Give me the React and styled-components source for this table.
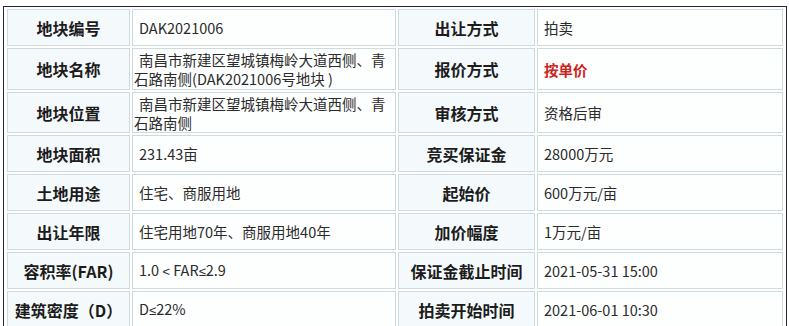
import React from 'react'
import styled, { createGlobalStyle } from 'styled-components'

const GlobalStyle = createGlobalStyle`
  html, body {
    margin: 0;
    padding: 0;
    background: #ffffff;
  }
  body {
    font-family: "Noto Sans CJK SC", "Noto Sans", sans-serif;
  }
`

const Page = styled.div`
  width: 789px;
  height: 326px;
  overflow: hidden;
  padding: 6px 0 0 3px;
  box-sizing: border-box;
`

const Frame = styled.div`
  width: 784px;
  box-sizing: border-box;
  border: 1px solid #25254a;
  padding: 2px 3px 3px 3px;
`

const Grid = styled.div`
  display: grid;
  grid-template-columns: 123px 264px 137px 246px;
  column-gap: 2px;
  row-gap: 2px;
`

const Cell = styled.div`
  box-sizing: border-box;
  border: 1px solid #cddade;
  display: flex;
  align-items: center;
`

const Label = styled(Cell)`
  background: #f4f9fb;
  justify-content: center;
  font-size: 16px;
  font-weight: bold;
  color: #1c1c1c;
  white-space: nowrap;
`

const Value = styled(Cell)`
  background: #fdfefe;
  padding: 0 1px 0 1px;
  font-size: 14.5px;
  line-height: 19px;
  text-indent: 5px;
  color: ${props => (props.$red ? '#cc2420' : '#2b2b2b')};
  font-weight: ${props => (props.$red ? 'bold' : 'normal')};
`

// narrow math signs, like the original page's font
const Sym = styled.span`
  font-family: "Liberation Sans", "DejaVu Sans", sans-serif;
  font-size: 13px;
`

const rows = [
  { height: 37, items: [['地块编号', 'DAK2021006'], ['出让方式', '拍卖']] },
  { height: 42, items: [['地块名称', '南昌市新建区望城镇梅岭大道西侧、青石路南侧(DAK2021006号地块 )'], ['报价方式', '按单价', true]] },
  { height: 41, items: [['地块位置', '南昌市新建区望城镇梅岭大道西侧、青石路南侧'], ['审核方式', '资格后审']] },
  { height: 37, items: [['地块面积', '231.43亩'], ['竞买保证金', '28000万元']] },
  { height: 37, items: [['土地用途', '住宅、商服用地'], ['起始价', '600万元/亩']] },
  { height: 37, items: [['出让年限', '住宅用地70年、商服用地40年'], ['加价幅度', '1万元/亩']] },
  { height: 37, items: [['容积率(FAR)', <>1.0 <Sym>&lt;</Sym> FAR<Sym>≤</Sym>2.9</>], ['保证金截止时间', '2021-05-31 15:00']] },
  { height: 37, items: [['建筑密度（D）', <>D<Sym>≤</Sym>22%</>], ['拍卖开始时间', '2021-06-01 10:30']] },
]

function App() {
  return (
    <>
      <GlobalStyle />
      <Page>
        <Frame>
          <Grid>
            {rows.map((row, r) =>
              row.items.map(([label, value, red], c) => (
                <React.Fragment key={`${r}-${c}`}>
                  <Label style={{ height: row.height }}>{label}</Label>
                  <Value style={{ height: row.height }} $red={red}>
                    <span>{value}</span>
                  </Value>
                </React.Fragment>
              ))
            )}
          </Grid>
        </Frame>
      </Page>
    </>
  )
}

export default App
